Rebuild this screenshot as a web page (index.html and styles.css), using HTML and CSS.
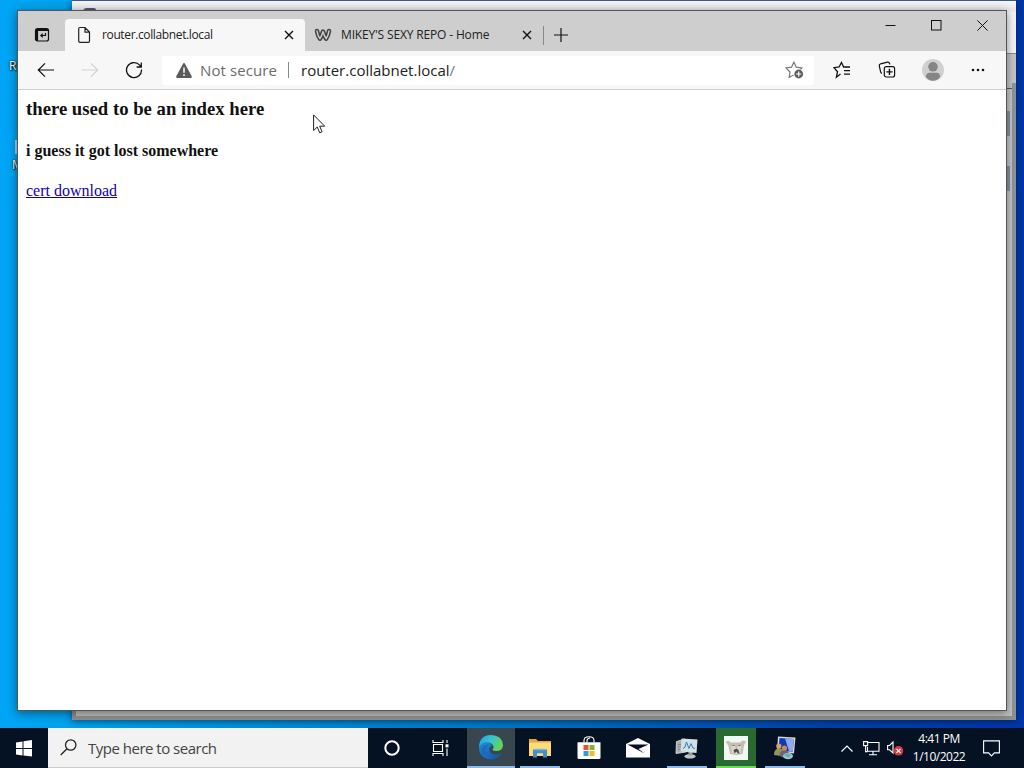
FILE: index.html
```
<!DOCTYPE html>
<html lang="en">
<head>
    <meta charset="UTF-8">
    <title>Desktop</title>
    <link rel="stylesheet" href="styles.css">
</head>
<body>
<div class="desktop">
  <span class="desk-label label-r">R</span>
  <span class="desk-sliver"></span>
  <span class="desk-label label-m">M</span>

  <!-- window behind the browser -->
  <div class="back-window">
    <div class="back-title"><span class="back-icon"></span></div>
    <div class="back-side"></div>
    <div class="back-scroll">
      <span class="scroll-mark"></span>
      <span class="scroll-mark"></span>
    </div>
    <div class="back-bottom"></div>
  </div>

  <div class="browser">
    <div class="tab-strip">
      <div class="tab-actions">
        <svg width="16" height="16" viewBox="0 0 16 16" fill="none" stroke="#111" stroke-width="1.2"><rect x="1.5" y="1.5" width="13" height="12.500" rx="2"/><path d="M2 3h12.500M3 2v12" stroke-width="2.200"/><path d="M11.500 6v2.500H7M8.800 6.600 6.800 8.500l2 1.900"/></svg>
      </div>
      <div class="tab active">
        <svg width="16" height="18" viewBox="0 0 16 18" fill="none" stroke="#222" stroke-width="1.2"><path d="M4 1.500h5l4.500 4.600V15q0 1.300-1.300 1.300H4q-1.300 0-1.300-1.300V2.800Q2.700 1.500 4 1.500ZM9 1.500V6.100h4.500"/></svg>
        <span class="tab-title title-router">router.collabnet.local</span>
        <svg class="tab-close" width="10" height="10" viewBox="0 0 10 10" stroke="#111" stroke-width="1.4"><path d="M1 1l8 8M9 1 1 9"/></svg>
      </div>
      <div class="tab">
        <svg width="18" height="14" viewBox="0 0 18 14" fill="none" stroke-linecap="round" stroke-linejoin="round"><path d="M3 3Q3.800 8 5.900 10.600 7.800 8 9 3.600q1.200 4.400 3.100 7Q14.200 8 15 3" stroke="#444" stroke-width="4.600"/><path d="M3 3Q3.800 8 5.900 10.600 7.800 8 9 3.600q1.200 4.400 3.100 7Q14.200 8 15 3" stroke="#cecece" stroke-width="1.500"/></svg>
        <span class="tab-title title-repo">MIKEY'S SEXY REPO - Home</span>
        <svg class="tab-close" width="10" height="10" viewBox="0 0 10 10" stroke="#111" stroke-width="1.4"><path d="M1 1l8 8M9 1 1 9"/></svg>
      </div>
      <div class="new-tab">
        <svg width="14" height="14" viewBox="0 0 14 14" stroke="#111" stroke-width="1.200"><path d="M7 0v14M0 7h14"/></svg>
      </div>
      <div class="window-btns">
        <svg width="11" height="11" viewBox="0 0 11 11" stroke="#111"><path d="M.5 5.500h10"/></svg>
        <svg width="11" height="11" viewBox="0 0 11 11" fill="none" stroke="#111"><rect x=".5" y=".5" width="9.500" height="9.500"/></svg>
        <svg width="11" height="11" viewBox="0 0 11 11" stroke="#111"><path d="M.4.400l10.200 10.200M10.600.400.400 10.600"/></svg>
      </div>
    </div>

    <div class="toolbar">
      <div class="nav-btns">
        <svg width="18" height="16" viewBox="0 0 18 16" fill="none" stroke="#111" stroke-width="1.200"><path d="M17 8H1.500M8 1.300 1.300 8 8 14.700"/></svg>
        <svg width="18" height="16" viewBox="0 0 18 16" fill="none" stroke="#d2d2d2" stroke-width="1.200"><path d="M1 8h15.500M10 1.300 16.700 8 10 14.700"/></svg>
        <svg width="18" height="18" viewBox="0 0 18 18" fill="none" stroke="#111" stroke-width="1.300"><path d="M16.500 8.500A7.500 7.500 0 1 1 14.700 4.200L16 5.800M16.300 1.500v4.500h-4.700"/></svg>
      </div>
      <div class="address">
        <svg width="16" height="15" viewBox="0 0 16 15"><path d="M7 .8Q8 -.6 9 .8L15.700 13.200Q16.200 15 14.800 15H1.200Q-.2 15 .3 13.200Z" fill="#5a5a5a"/><path d="M8 4.500v5.200M8 11.300v1.700" stroke="#fff" stroke-width="1.500"/></svg>
        <span class="not-secure">Not secure</span>
        <span class="address-line"></span>
        <span class="url">router.collabnet.local<span class="slash">/</span></span>
        <svg class="add-fav" width="19" height="18" viewBox="0 0 19 18" fill="none" stroke="#777" stroke-width="1.200"><path d="M8.500 14 4.200 16.400 5 11 1 7l5.500-.8L8.900 1.200l2.400 5 5.500.8-1.300 1.300"/><circle cx="13.700" cy="13" r="4.400" fill="#5d5d5d" stroke="none"/><path d="M13.700 10.500v5M11.200 13h5" stroke="#fff"/></svg>
      </div>
      <div class="tool-btns">
        <svg width="18" height="18" viewBox="0 0 18 18" fill="none" stroke="#111" stroke-width="1.300"><path d="M7.500 13 3.400 16.200 4.500 10.700 1 6.700l5.100-.7L8.500 1.500 10.600 6H17M11 9.600h6M11 13.200h6"/></svg>
        <svg width="18" height="18" viewBox="0 0 18 18" fill="none" stroke="#111" stroke-width="1.200"><path d="M4 12.400Q2.900 12 2.600 10.800L1.300 5Q1 3.300 2.600 2.800L9.500 1.100q1.500-.3 2 1.200l.3 1"/><rect x="6.300" y="5.700" width="10.300" height="10.300" rx="2"/><path d="M11.450 7.800v6.200M8.400 10.900h6.200" stroke-width="1.400"/></svg>
        <svg width="22" height="22" viewBox="0 0 22 22"><circle cx="11" cy="11" r="11" fill="#d0d0d0"/><circle cx="11" cy="7.800" r="4.800" fill="#858585"/><path d="M3.700 17.500q.5-3.800 4-3.800h6.600q3.500 0 4 3.800Q15.500 21.800 11 21.800T3.700 17.500Z" fill="#858585"/></svg>
        <svg width="14" height="4" viewBox="0 0 14 4" fill="#111"><circle cx="2" cy="2" r="1.300"/><circle cx="7" cy="2" r="1.300"/><circle cx="12" cy="2" r="1.300"/></svg>
      </div>
    </div>

    <div class="page">
      <h3>there used to be an index here</h3>
      <h4>i guess it got lost somewhere</h4>
      <a href="#">cert download</a>
    </div>
  </div>

  <svg class="cursor" width="13" height="20" viewBox="0 0 13 20"><path d="M.6.900V16.500L4.300 13l2.400 5.800 2.400-1-2.400-5.600h5Z" fill="#fff" stroke="#222"/></svg>
</div>

<div class="taskbar">
  <div class="start">
    <svg width="17" height="17" viewBox="0 0 17 17" fill="#fff"><path d="M0 2.400 6.500 1.500V8H0ZM7.500 1.300 16 0v8H7.500ZM0 9h6.500v6.500L0 14.600ZM7.500 9H16v7.500L7.500 15.600Z"/></svg>
  </div>
  <div class="search">
    <svg width="17" height="17" viewBox="0 0 17 17" fill="none" stroke="#222" stroke-width="1.300"><circle cx="10.700" cy="6" r="5.200"/><path d="M7 9.700.700 16"/></svg>
    <span class="search-text">Type here to search</span>
  </div>
  <div class="task">
    <svg width="16" height="16" viewBox="0 0 16 16" fill="none" stroke="#fff" stroke-width="2"><circle cx="8" cy="8" r="6.700"/></svg>
  </div>
  <div class="task view">
    <svg width="17" height="16" viewBox="0 0 17 16" fill="none" stroke="#fff" stroke-width="1.100"><path d="M1 0v2.500h10V0M1 16v-2.500h10V16M1.500 4.500h9v7h-9ZM15 0v3M15 8.500V16"/><path d="M13.500 4.300h3v3h-3Z" fill="#fff" stroke="none"/></svg>
  </div>
  <div class="task current">
    <svg width="24" height="25" viewBox="0 0 24 25">
      <defs>
        <linearGradient id="edge-top" x1="0" y1="0" x2="1" y2=".4"><stop offset="0" stop-color="#239be0"/><stop offset=".5" stop-color="#31c5d3"/><stop offset="1" stop-color="#64d35b"/></linearGradient>
        <linearGradient id="edge-low" x1="0" y1="0" x2=".8" y2="1"><stop offset="0" stop-color="#208de0"/><stop offset="1" stop-color="#1457a5"/></linearGradient>
      </defs>
      <path d="M0 12Q1 7 6 7q6 0 7 4-3.500 1-2.500 5 2 4 7 3.500 2.500-.3 4.500-1.500.600.300 0 1Q18 24.500 12 24.500 0 23.500 0 12Z" fill="url(#edge-low)"/>
      <path d="M0 12Q.5 0 12 0q11 0 12 10 0 6-7 6-3.500 0-3.500-1.700Q15 13 14.500 11.500 13 7.300 7.500 7.300 2 7.500 0 12Z" fill="url(#edge-top)"/>
      <path d="M9.500 10Q6 12.500 7 17.500q1.500 5 6 6.800Q2.500 24 2.500 15 3.500 9.500 9.500 10Z" fill="#1c6cbd"/>
    </svg>
  </div>
  <div class="task open">
    <svg width="22" height="19" viewBox="0 0 22 19"><path d="M0 0h7l2 2h13v15H0Z" fill="#e9a63c"/><path d="M0 3.500h22V17H0Z" fill="#ffdb78"/><path d="M4 18.500V10.500h14v8h-4V14.300H8v4.200Z" fill="#3e8fce"/><path d="M5.500 9.800h11v1.500h-11Z" fill="#70b7e6"/></svg>
  </div>
  <div class="task">
    <svg width="24" height="24" viewBox="0 0 24 24"><path d="M7 6.500V4.500Q7 .8 12 .8t5 3.700v2M10 6.500V4.800q0-2.300 3-2.800" fill="none" stroke="#fff" stroke-width="1.100"/><path d="M.5 6.300h23V21.500q0 1.500-1.500 1.500H2Q.5 23 .5 21.500Z" fill="#fff"/><path d="M6.500 9h5v5h-5Z" fill="#e8502d"/><path d="M12.500 9h5v5h-5Z" fill="#79b72b"/><path d="M6.500 15h5v5h-5Z" fill="#2ba0dc"/><path d="M12.500 15h5v5h-5Z" fill="#f9b826"/></svg>
  </div>
  <div class="task">
    <svg width="24" height="20" viewBox="0 0 24 20"><path d="M0 6 12 0 24 6V19.500H0Z" fill="#fff"/><path d="M1.500 6.500h21L12.500 11l6 4.500Z" fill="#06101d"/></svg>
  </div>
  <div class="task open">
    <svg width="24" height="24" viewBox="0 0 24 24"><path d="M1.500 5.500 10 3 11 16 1 17.500Z" fill="#a9afb0" stroke="#e5e8e6" stroke-width=".8"/><path d="M3 8.500h5M3 11h5M3 13.500h5" stroke="#747f82" stroke-width=".8"/><ellipse cx="15" cy="20.300" rx="5.500" ry="2.300" fill="#c3c5c3"/><path d="M13.500 15h4v4.500h-4Z" fill="#999"/><path d="M6.500 2.500 22.500 3.500 21.500 17 5.500 15.500Z" fill="#d9dfdd"/><path d="M8 4.200 20.800 5 20 15.200 7.300 14Z" fill="#c9e4ef"/><path d="m8 12.500 2-1.500 1.500-5 2.500 6.500 2-5 2 4.500 2 .5" fill="none" stroke="#427c9e"/></svg>
  </div>
  <div class="task open green">
    <svg width="24" height="24" viewBox="0 0 24 24"><path d="M0 0h24v24H0Z" fill="#f2f7f3"/><path d="M1.500 5.500 4.500 4.800 7 6.500h9l2.500-2L22 5.200 20 9.500 18.500 18l-6 1-6.500-1-1.500-8Z" fill="#c4beb2"/><path d="M7 10h4l1 3 2-3h3.500l-1 7-4 1-4.500-1Z" fill="#dcd7cb"/><path d="M9.500 14 12.500 12.500l2 1.500 1 4-2-1-1-1.500-2 2Z" fill="#4b4d48"/><path d="M8.500 9.500h2M14.500 9.500h2" stroke="#77736a"/></svg>
  </div>
  <div class="task open">
    <svg width="24" height="24" viewBox="0 0 24 24"><path d="M5 .5 22.500 1.500 21 17.500 4 15.500Z" fill="#d5d8cf"/><path d="M6.500 2 21 3 19.700 15.800 5.500 14Z" fill="#1238b8"/><path d="M12 2.500 21 3 19.700 15.800 16 15Z" fill="#91a8e9"/><path d="M1 19q0-6 4.500-6.500T11 17l-3 3Z" fill="#8c9a55"/><circle cx="5.800" cy="10" r="2.600" fill="#d5a45b"/><path d="M6.500 20q0-6 5-6t5.500 6l-5.500 2Z" fill="#6c6473"/><circle cx="11.500" cy="12" r="2.600" fill="#c68c50"/><ellipse cx="15" cy="20" rx="5" ry="3.300" fill="#9fc9cd"/><path d="m10.500 19 3-2 5 2-3 3Z" fill="#6eacbd"/></svg>
  </div>
  <div class="tray">
    <svg class="chevron" width="12" height="7" viewBox="0 0 12 7" fill="none" stroke="#fff" stroke-width="1.200"><path d="M.5 6.500 6 1l5.500 5.500"/></svg>
    <svg class="network" width="17" height="15" viewBox="0 0 17 15" fill="none" stroke="#fff" stroke-width="1.100"><path d="M4.500 1.500H16v8.700H4.500V6M10 10.200V13.500M6 13.700h8M.6.600h4v4h-4ZM2.600 4.600v6h2"/></svg>
    <svg class="sound" width="17" height="15" viewBox="0 0 17 15"><path d="M.6 4.500h2L6 1v11L2.600 8.800h-2Z" fill="none" stroke="#fff" stroke-width="1.100"/><circle cx="11.500" cy="9.800" r="4.800" fill="#d33c40"/><path d="m9.500 7.800 4 4M13.500 7.800l-4 4" stroke="#fff" stroke-width="1.200"/></svg>
    <div class="clock"><span class="time">4:41 PM</span><span class="date">1/10/2022</span></div>
    <svg class="notify" width="17" height="17" viewBox="0 0 17 17" fill="none" stroke="#fff" stroke-width="1.100"><path d="M.6.900h15.800v12h-5L8.500 16 5.600 12.900h-5Z"/></svg>
  </div>
</div>
</body>
</html>
```
FILE: styles.css
```
*{
  box-sizing: border-box;
}

body{
  margin: 0;
  width: 1024px;
  height: 768px;
  overflow: hidden;
  display: flex;
  flex-direction: column;
  font-family: "Open Sans", sans-serif;
}

svg{
  display: block;
  flex-shrink: 0;
}

.desktop{
  position: relative;
  height: 728px;
  overflow: hidden;
  background: linear-gradient(90deg, #00a5f5 0, #009fe8 10%, #0076c4 50%, #0040a8 82%, #0036a8 100%);
}

.desk-label{
  position: absolute;
  color: #fff;
  font-size: 12px;
  line-height: 16px;
  text-shadow: 1px 1px 2px #000, 0 0 2px #000;
}

.label-r{
  left: 9px;
  top: 58px;
}

.label-m{
  left: 12px;
  top: 157px;
}

.desk-sliver{
  position: absolute;
  left: 15px;
  top: 140px;
  width: 3px;
  height: 14px;
  background: #9cd5f2;
}

/* back window */
.back-window{
  position: absolute;
  left: 72px;
  top: 0;
  width: 944px;
  height: 720px;
  background: #c4c6c8;
  border-top: 1px solid #3a5a8c;
  box-shadow: 0 1px 7px rgba(0, 20, 50, 0.6);
}

.back-title{
  height: 53px;
  padding: 7px 0 0 11px;
  background: linear-gradient(#f4f7fd 0, #e9e7e8 9px, #f5f6fb 12px);
  border-bottom: 1px solid #8b8e92;
}

.back-icon{
  display: block;
  width: 13px;
  height: 4px;
  background: #55557c;
  border-radius: 4px 2px 0 0;
}

.back-side{
  position: absolute;
  right: 0;
  top: 82px;
  width: 4px;
  bottom: 0;
  background: #8e959b;
}

.back-scroll{
  position: absolute;
  right: 4px;
  top: 87px;
  width: 6px;
  bottom: 10px;
  padding-top: 22px;
  border-top: 1px solid #50565c;
  background: #c6c9cd;
  display: flex;
  flex-direction: column;
  gap: 30px;
}

.scroll-mark{
  height: 25px;
  width: 4px;
  background: #8995a4;
}

.back-bottom{
  position: absolute;
  left: 0;
  right: 0;
  bottom: 0;
  height: 10px;
  border: solid #8f9191;
  border-width: 0 4px 4px;
  background: #c1c1c1;
}

/* browser */
.browser{
  position: absolute;
  left: 17px;
  top: 10px;
  width: 990px;
  height: 701px;
  border: 1px solid #555;
  background: #fff;
  box-shadow: 0 2px 9px rgba(0, 0, 0, 0.45);
  display: flex;
  flex-direction: column;
}

.tab-strip{
  height: 40px;
  background: #cecece;
  display: flex;
  align-items: flex-end;
}

.tab-actions{
  width: 47px;
  height: 32px;
  padding: 8px 0 0 16px;
}

.tab{
  width: 238px;
  height: 32px;
  display: flex;
  align-items: center;
  padding: 0 11px 0 9px;
}

.tab.active{
  width: 240px;
  padding-left: 11px;
  background: #f7f7f7;
  border-radius: 4px 4px 0 0;
}

.tab-title{
  font-size: 12px;
  line-height: 16px;
  margin-bottom: 1px;
  white-space: nowrap;
  color: #222;
}

.title-router{
  margin-left: 10px;
  letter-spacing: -0.37px;
}

.title-repo{
  margin-left: 9px;
  letter-spacing: -0.15px;
}

.tab-close{
  margin-left: auto;
}

.new-tab{
  height: 19px;
  margin-bottom: 6px;
  padding: 2px 0 0 10px;
  border-left: 1px solid #888;
}

.window-btns{
  height: 40px;
  margin-left: auto;
  padding: 9px 18px 0 0;
  display: flex;
  gap: 35px;
}

.toolbar{
  height: 39px;
  background: #f7f7f7;
  border-bottom: 1px solid #cfcfcf;
  display: flex;
  align-items: center;
}

.nav-btns{
  width: 144px;
  padding-left: 19px;
  display: flex;
  align-items: center;
  gap: 26px;
}

.address{
  width: 652px;
  height: 29px;
  padding: 0 10px 0 14px;
  background: #fff;
  border-radius: 3px;
  display: flex;
  align-items: center;
  font-size: 15px;
  white-space: nowrap;
}

.not-secure{
  margin-left: 8px;
  width: 88px;
  color: #6b6b6b;
  letter-spacing: 0.1px;
}

.address-line{
  width: 1px;
  height: 16px;
  margin-right: 12px;
  background: #888;
}

.url{
  color: #222;
}

.slash{
  color: #777;
}

.add-fav{
  margin-left: auto;
}

.tool-btns{
  flex: 1;
  padding: 0 21px 0 19px;
  display: flex;
  align-items: center;
  justify-content: space-between;
}

.page{
  flex: 1;
  padding: 8px;
  font-family: "Liberation Serif", serif;
  font-size: 16px;
  color: #111;
}

.page h3{
  margin: 0 0 22px;
  font-size: 18.72px;
  line-height: 22px;
}

.page h4{
  margin: 0 0 22px;
  font-size: 16px;
  line-height: 18px;
}

.page a{
  color: #1400a8;
}

.cursor{
  position: absolute;
  left: 313px;
  top: 114px;
}

/* taskbar */
.taskbar{
  height: 40px;
  background: #041224;
  display: flex;
}

.start{
  width: 48px;
  padding: 12px 0 0 16px;
}

.search{
  width: 320px;
  padding-left: 12px;
  background: #f2f2f2;
  border: 1px solid #ccc;
  border-width: 0 0 1px;
  display: flex;
  align-items: center;
}

.search-text{
  margin-left: 11px;
  font-size: 15px;
  letter-spacing: -0.5px;
  color: #444;
  white-space: nowrap;
}

.task{
  width: 48px;
  margin-right: 1px;
  display: flex;
  align-items: center;
  justify-content: center;
}

.view{
  padding-right: 2px;
}

.open{
  background: linear-gradient(#8dbbe9, #8dbbe9) center bottom / 40px 2px no-repeat;
}

.current{
  margin-left: 1px;
  padding-top: 1px;
  background: #37464f;
  border-bottom: 2px solid #8dbbe9;
}

.green{
  width: 40px;
  margin: 0 5px 0 4px;
  padding-top: 2px;
  background: #2a6931;
  border-bottom: 2px solid #67dc5c;
}

.tray{
  flex: 1;
  padding-left: 31px;
  color: #fff;
  display: flex;
  align-items: center;
}

.network{
  margin: 0 7px 0 10px;
}

.sound{
  margin-right: 7px;
}

.clock{
  width: 56px;
  display: flex;
  flex-direction: column;
  align-items: center;
  font-size: 12px;
  line-height: 18px;
  white-space: nowrap;
  letter-spacing: -0.5px;
}

.notify{
  margin-left: 16px;
}
```
